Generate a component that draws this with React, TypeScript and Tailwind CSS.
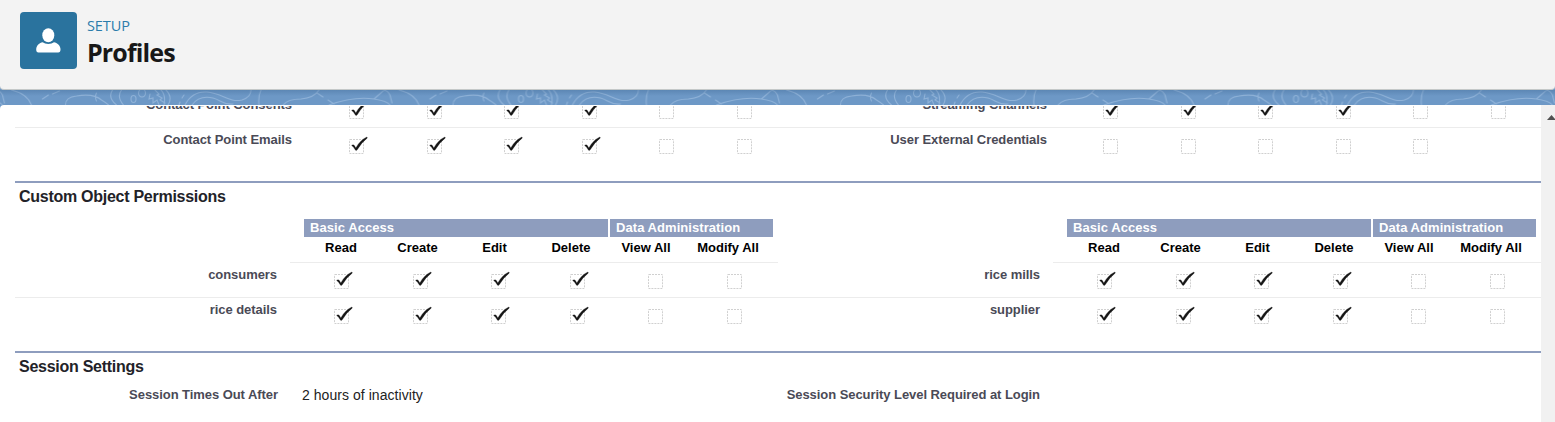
import React from "react";

type Row = { label: string; values: (boolean | null)[] };

const granted = [true, true, true, true, false, false];

function Box({ checked }: { checked: boolean }) {
  return (
    <svg width="16" height="16" viewBox="0 0 16 16" className="block overflow-visible">
      <rect x="0.5" y="0.5" width="14" height="14" rx="0.5" fill="none" stroke="#d0d0d0" strokeDasharray="2 1" />
      {checked && (
        <path
          d="M2.6 6.4 Q4.2 5 5.4 6.6 L6.8 9 Q10.8 1.4 17.8 -2 L18.4 -1.1 Q12.2 3.6 8.4 10.6 Q7.2 12.4 6 10.6 Q5 8 2.6 6.4 Z"
          fill="#161616"
          stroke="#161616"
          strokeWidth="0.3"
        />
      )}
    </svg>
  );
}

function Boxes({ values, wide }: { values: (boolean | null)[]; wide?: boolean }) {
  return (
    <div className="flex">
      {values.map((v, i) => (
        <div key={i} className={wide ? "w-[78.5px] shrink-0" : "w-[77.5px] shrink-0"}>
          {v !== null && <Box checked={v} />}
        </div>
      ))}
    </div>
  );
}

function Label({ children }: { children: React.ReactNode }) {
  return (
    <div className="text-right text-[13px] leading-4 font-bold tracking-[-0.06px] whitespace-nowrap text-[#4a4a56]">
      {children}
    </div>
  );
}

function StandardRow({ left, right }: { left: Row; right: Row }) {
  return (
    <div className="grid h-[35px] shrink-0 grid-cols-[277px_57px_465px_233px_56px_438px] border-b border-[#ececec] pt-1 last:border-0">
      <Label>{left.label}</Label>
      <div />
      <div className="pt-[7px]"><Boxes values={left.values} /></div>
      <Label>{right.label}</Label>
      <div />
      <div className="pt-[7px]"><Boxes values={right.values} /></div>
    </div>
  );
}

function CustomRow({ left, right }: { left: string; right: string }) {
  return (
    <div className="grid h-[35px] grid-cols-[262px_57.3px_471px_234.7px_57.3px_443.7px] border-b border-[#ececec] pt-1 last:border-0">
      <Label>{left}</Label>
      <div />
      <div className="pt-[7px]"><Boxes values={granted} wide /></div>
      <Label>{right}</Label>
      <div />
      <div className="pt-[7px]"><Boxes values={granted} wide /></div>
    </div>
  );
}

function AccessHeader() {
  return (
    <div className="w-[488px] border-b border-[#ececec]">
      <div className="flex h-[18px] gap-[2px] pl-[14px] text-[13px] leading-[18px] font-bold tracking-[0.06px] whitespace-nowrap text-white">
        <div className="w-[304px] bg-[#8e9dbe] pl-[6px]">Basic Access</div>
        <div className="w-[163px] bg-[#8e9dbe] pl-[6px]">Data Administration</div>
      </div>
      <div className="grid h-[25px] grid-cols-[76px_77px_77px_76px_74px_90px] pt-[2px] pl-[13px] text-center text-[13px] leading-[18px] font-bold whitespace-nowrap text-black">
        <div>Read</div>
        <div>Create</div>
        <div>Edit</div>
        <div>Delete</div>
        <div>View All</div>
        <div>Modify All</div>
      </div>
    </div>
  );
}

function Topography() {
  return (
    <svg width="1555" height="15" className="block" fill="none">
      <defs>
        <pattern id="waves" x="-257.5" y="0" width="387.5" height="15" patternUnits="userSpaceOnUse">
          <g fill="none" stroke="#8fb2d8" strokeWidth="1.1" strokeLinecap="round">
            <ellipse cx="3.5" cy="9" rx="2.5" ry="3.5" />
            <ellipse cx="12" cy="3" rx="3.5" ry="4" />
            <path d="M20 4L19 9L23 8L23 13L27 10L29 15M25 0L29 4L27 5L32 8L30 10L35 13M31 0Q36 5 34 15M36 0Q43 7 38 15" />
            <path d="M54 5L52 8M50 12L49 15M55 15Q62 1 77 2C92 3 99 13 112 10Q121 7 121 0M62 15Q69 5 83 8C91 10 92 15 103 14M131 0Q128 6 129 15" />
            <path d="M153 15Q158 9 171 9Q184 8 189 0M187 3L193 7M198 10L204 14M199 15Q224 6 244 9Q257 11 260 15M244 9L252 2Q256-2 260 5L262 13M269 0Q285 4 289 15M300 9L306 5M310 4L317 1" />
            <path d="M323 15Q323 7 334 6Q351 3 359 10Q364 13 366 15M370 0Q365 8 374 15M379 0Q374 7 381 15M354 3Q352 7 354 11" />
          </g>
        </pattern>
        <linearGradient id="shade" x2="0" y2="1">
          <stop offset="0" stopColor="#365f8b" stopOpacity=".3" />
          <stop offset=".4" stopColor="#365f8b" stopOpacity="0" />
        </linearGradient>
      </defs>
      <rect width="1555" height="15" fill="url(#waves)" />
      <rect width="1555" height="15" fill="url(#shade)" />
    </svg>
  );
}

function SectionTitle({ children }: { children: React.ReactNode }) {
  return (
    <h2 className="border-t-2 border-[#8e9dbe] pt-[4px] pl-1 text-base leading-[20px] font-bold tracking-[-0.27px] text-[#222228]">
      {children}
    </h2>
  );
}

export default function App() {
  return (
    <div className="flex h-[422px] w-[1555px] flex-col overflow-hidden bg-[#6d98c6] font-['Liberation_Sans',Arial,sans-serif]">
      <header className="flex h-[90px] shrink-0 rounded-b-[4px] border-b border-[#c4c8c8] bg-[#f3f3f3] pt-3 pl-5">
        <div className="flex size-[57px] items-center justify-center rounded-[4px] bg-[#2a739e]">
          <svg width="25" height="25" viewBox="0 0 25 25" fill="white">
            <ellipse cx="12.3" cy="7.2" rx="6" ry="7" />
            <path d="M6.6 14.2Q8.8 16 12.3 16T18 14.2C21 15 24.5 17.2 24.5 21.5Q24.5 24.5 22.2 24.5H2.4Q.2 24.5.2 21.5C.2 17.2 3.6 15 6.6 14.2Z" />
          </svg>
        </div>
        <div className="pl-[10px] font-['Open_Sans','Noto_Sans',sans-serif] whitespace-nowrap">
          <div className="mt-[4px] text-[14.5px] leading-5 tracking-[-0.1px] text-[#2b7cab]">SETUP</div>
          <h1 className="text-[25px] leading-8 font-bold tracking-[-0.85px] text-[#181818]">Profiles</h1>
        </div>
      </header>
      <Topography />
      <main className="flex min-h-0 flex-1 overflow-hidden rounded-tl-[4px] bg-white">
        <div className="w-[1541px] pl-[15px]">
          <section className="flex h-[76px] flex-col justify-end overflow-hidden pt-px">
            <div className="flex h-[75px] flex-col justify-end overflow-hidden pb-[18px]">
              <StandardRow
                left={{ label: "Contact Point Consents", values: granted }}
                right={{ label: "Streaming Channels", values: granted }}
              />
              <StandardRow
                left={{ label: "Contact Point Emails", values: granted }}
                right={{ label: "User External Credentials", values: [false, false, false, false, false, null] }}
              />
            </div>
          </section>
          <section className="h-[170px]">
            <SectionTitle>Custom Object Permissions</SectionTitle>
            <div className="flex gap-[275px] pt-[12px] pl-[275px]">
              <AccessHeader />
              <AccessHeader />
            </div>
            <CustomRow left="consumers" right="rice mills" />
            <CustomRow left="rice details" right="supplier" />
          </section>
          <section>
            <SectionTitle>Session Settings</SectionTitle>
            <div className="grid grid-cols-[263px_24px_475px_263px] pt-[10px]">
              <Label>Session Times Out After</Label>
              <div />
              <div className="-mt-px text-sm leading-[18px] tracking-[0.05px] text-[#222]">2 hours of inactivity</div>
              <Label>Session Security Level Required at Login</Label>
            </div>
          </section>
        </div>
        <div className="flex w-[14px] justify-end bg-[#f1f1f1] pt-[10px]">
          <svg width="8" height="5" viewBox="0 0 8 5" className="block">
            <path d="M0 5L4.5 0L8 4V5Z" fill="#505050" />
          </svg>
        </div>
      </main>
    </div>
  );
}
